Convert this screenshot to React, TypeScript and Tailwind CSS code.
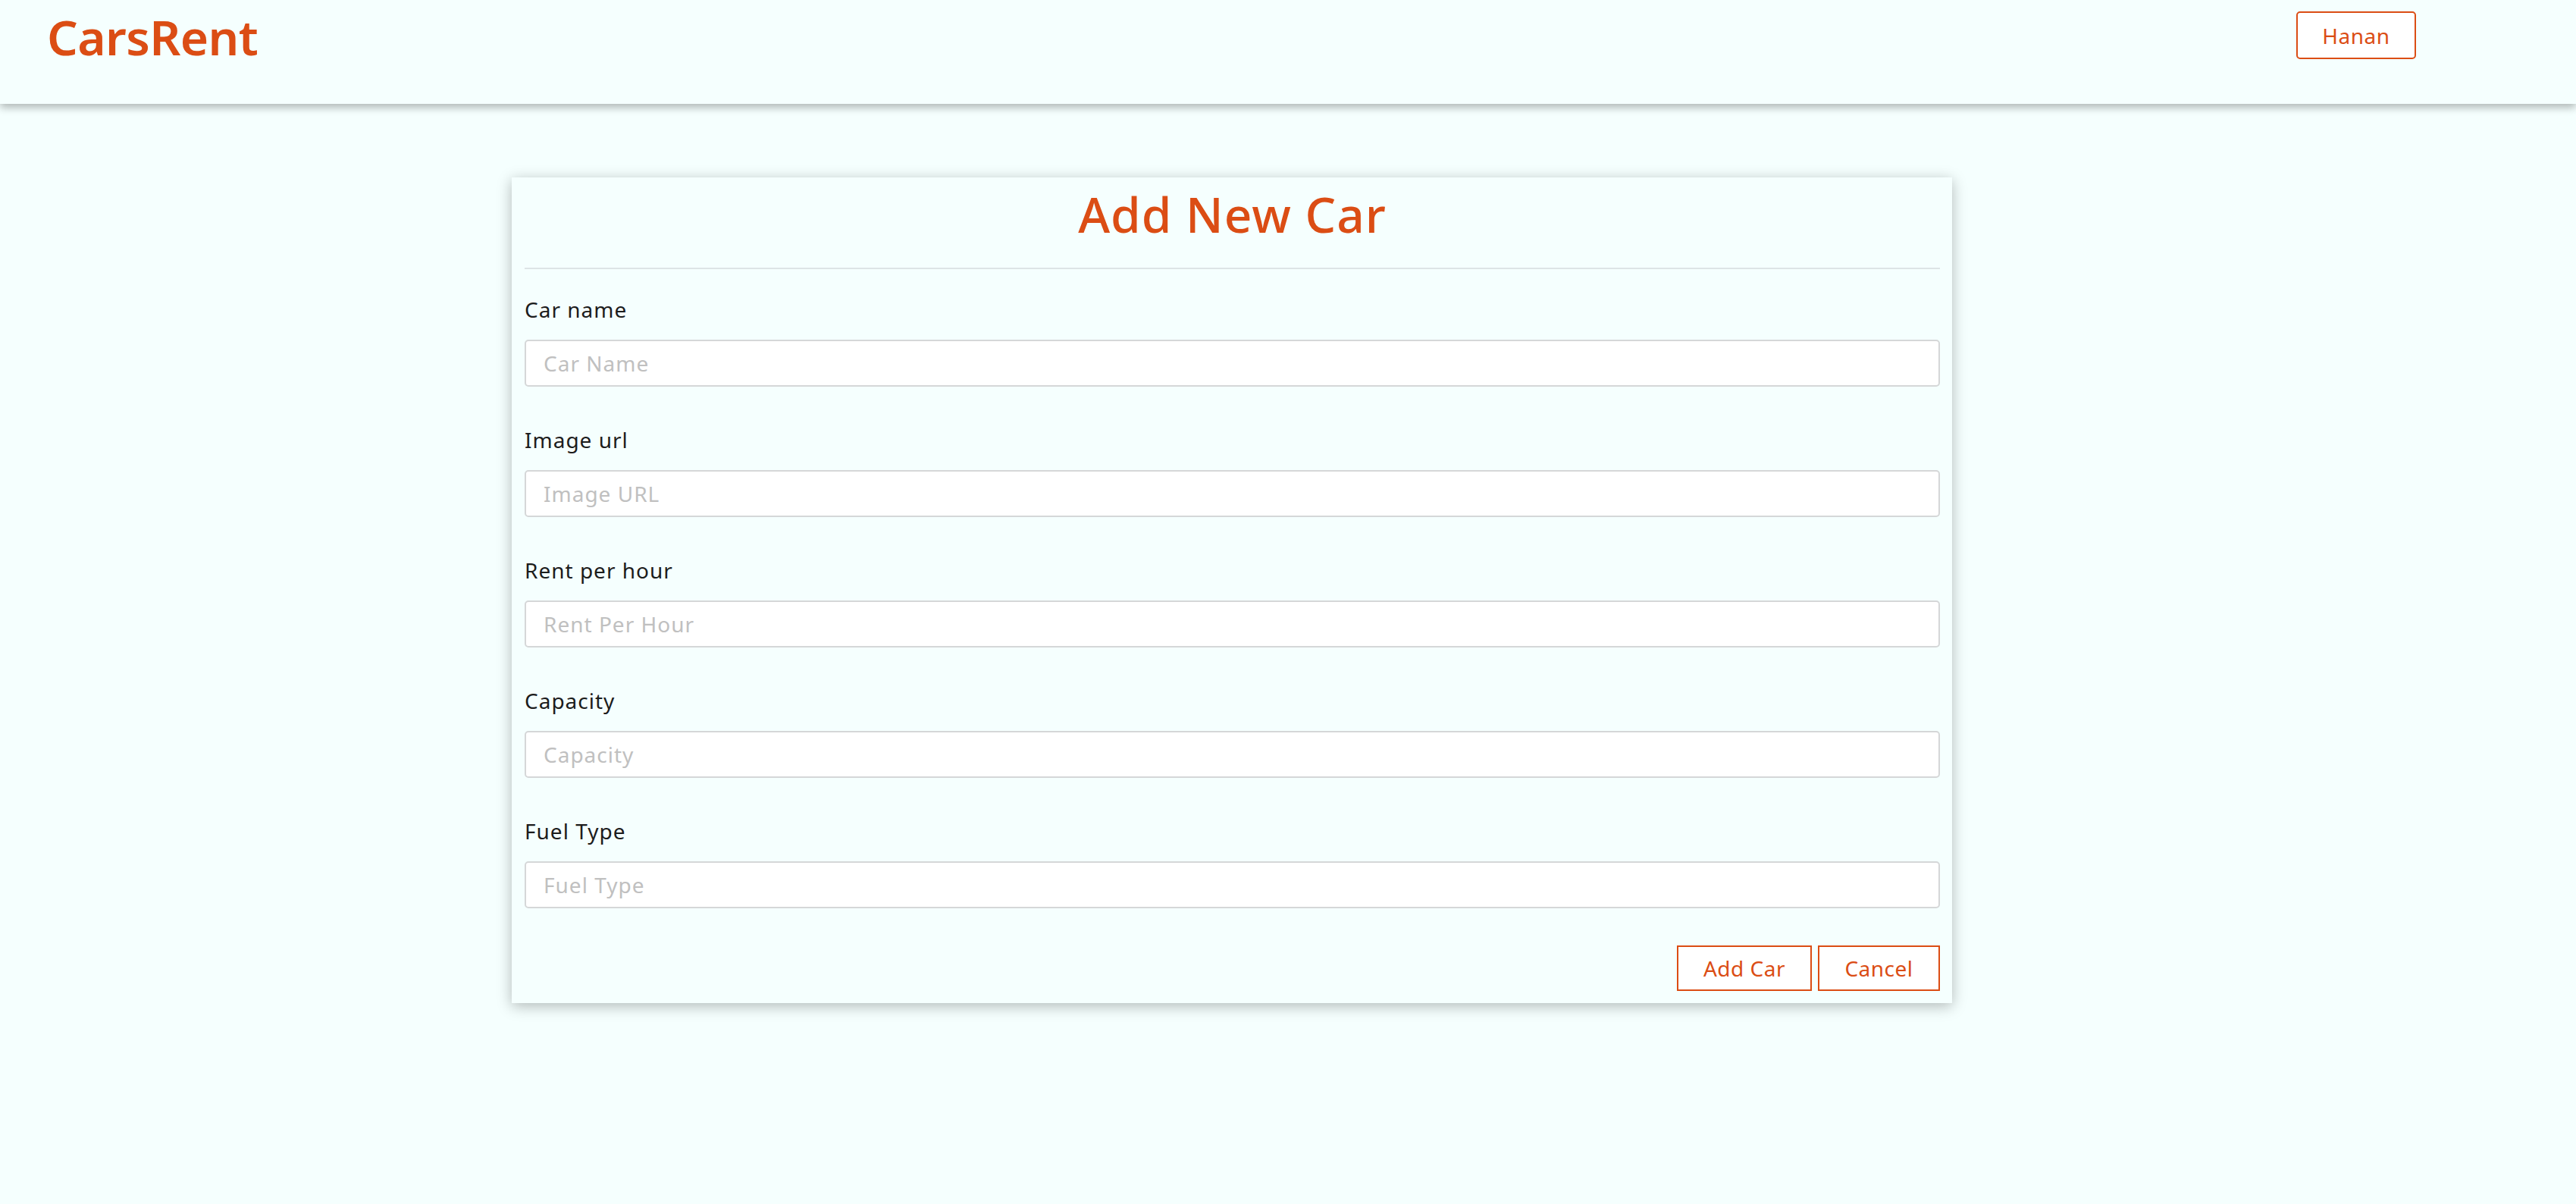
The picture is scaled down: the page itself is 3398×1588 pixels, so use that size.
import React from "react";

const font = { fontFamily: '"Noto Sans", "Liberation Sans", sans-serif' };

const fields = [
  { label: "Car name", placeholder: "Car Name" },
  { label: "Image url", placeholder: "Image URL" },
  { label: "Rent per hour", placeholder: "Rent Per Hour" },
  { label: "Capacity", placeholder: "Capacity" },
  { label: "Fuel Type", placeholder: "Fuel Type" },
];

export default function App() {
  return (
    <div
      className="min-h-[1588px] w-full bg-[#f5fffe] font-['Noto_Sans','Liberation_Sans',sans-serif]"
      style={font}
    >
      <header className="relative z-10 flex h-[137px] items-start justify-between bg-[#f5fffe] pl-[62px] pr-[211px] shadow-[0_5px_10px_rgba(0,0,0,0.28)]">
        <div className="mt-[9px] text-[64px] font-semibold leading-[80px] text-[#db4d14] tracking-[-0.6px]">
          CarsRent
        </div>
        <button className="mt-[15px] flex h-[63px] w-[158px] items-center justify-center rounded-[5px] border-2 border-[#db4d14] bg-white text-[28px] leading-none tracking-[0.5px] text-[#db4d14]">
          Hanan
        </button>
      </header>

      <main className="pt-[97px]">
        <div className="ml-[675px] w-[1900px] bg-[#f5fffe] pl-[17px] pr-[16px] pt-[9px] pb-[16px] shadow-[0_4px_18px_rgba(0,0,0,0.28)]">
          <h1 className="text-center text-[64px] font-medium leading-[80px] tracking-[1px] text-[#db4d14]">
            Add New Car
          </h1>
          <div className="mt-[30px] h-[2px] bg-[#dde4e6]" />
          <div className="mt-[33px] flex flex-col gap-[50px]">
            {fields.map((f) => (
              <div key={f.label} className="flex flex-col gap-[20px]">
                <label className="text-[28px] leading-[40px] tracking-[1px] text-[#1c1c1c]">
                  {f.label}
                </label>
                <input
                  type="text"
                  placeholder={f.placeholder}
                  className="h-[62px] w-full rounded-[5px] border-2 border-[#d5d7d8] bg-white px-[23px] text-[28px] tracking-[1px] text-[#333] outline-none placeholder:text-[#c0c0c0]"
                />
              </div>
            ))}
          </div>
          <div className="mt-[49px] flex justify-end gap-[8px]">
            <button className="flex h-[60px] w-[178px] items-center justify-center border-2 border-[#db4d14] bg-white text-[28px] leading-none tracking-[0.5px] text-[#db4d14]">
              Add Car
            </button>
            <button className="flex h-[60px] w-[161px] items-center justify-center border-2 border-[#db4d14] bg-white text-[28px] leading-none tracking-[0.5px] text-[#db4d14]">
              Cancel
            </button>
          </div>
        </div>
      </main>
    </div>
  );
}
